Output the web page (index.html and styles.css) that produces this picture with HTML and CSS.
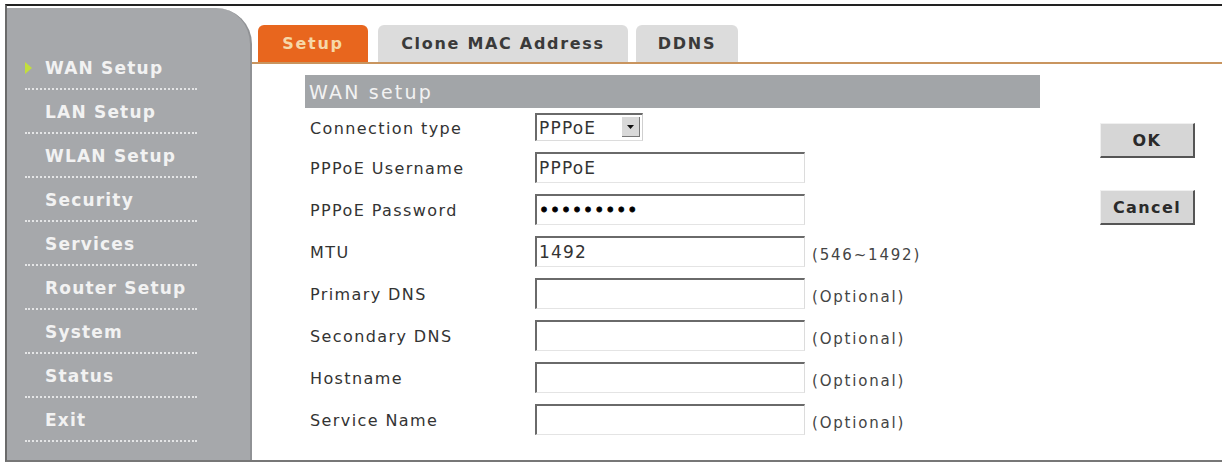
FILE: index.html
```html
<!DOCTYPE html>
<html lang="en">
<head>
<meta charset="utf-8">
<title>WAN Setup</title>
<link rel="stylesheet" href="styles.css">
</head>
<body>
<div class="frame">
  <nav class="sidebar">
    <ul class="menu">
      <li class="menu-item active">WAN Setup</li>
      <li class="menu-item">LAN Setup</li>
      <li class="menu-item">WLAN Setup</li>
      <li class="menu-item">Security</li>
      <li class="menu-item">Services</li>
      <li class="menu-item">Router Setup</li>
      <li class="menu-item">System</li>
      <li class="menu-item">Status</li>
      <li class="menu-item">Exit</li>
    </ul>
  </nav>
  <main class="main">
    <div class="tabs">
      <span class="tab tab-setup active">Setup</span>
      <span class="tab tab-clone">Clone MAC Address</span>
      <span class="tab tab-ddns">DDNS</span>
    </div>
    <div class="panel">
      <form class="wan-form">
        <div class="section-title">WAN setup</div>
        <div class="row first">
          <label class="label">Connection type</label>
          <div class="select-wrap">
            <select class="select"><option>PPPoE</option></select>
            <span class="select-arrow"><svg width="7" height="4" viewBox="0 0 7 4"><path d="M0 0h7L3.5 4z" fill="#111"/></svg></span>
          </div>
        </div>
        <div class="row">
          <label class="label">PPPoE Username</label>
          <input class="field" type="text" value="PPPoE">
        </div>
        <div class="row">
          <label class="label">PPPoE Password</label>
          <input class="field password" type="password" value="123456789">
        </div>
        <div class="row">
          <label class="label">MTU</label>
          <input class="field" type="text" value="1492">
          <span class="hint">(546~1492)</span>
        </div>
        <div class="row">
          <label class="label">Primary DNS</label>
          <input class="field" type="text">
          <span class="hint">(Optional)</span>
        </div>
        <div class="row">
          <label class="label">Secondary DNS</label>
          <input class="field" type="text">
          <span class="hint">(Optional)</span>
        </div>
        <div class="row">
          <label class="label">Hostname</label>
          <input class="field" type="text">
          <span class="hint">(Optional)</span>
        </div>
        <div class="row">
          <label class="label">Service Name</label>
          <input class="field" type="text">
          <span class="hint">(Optional)</span>
        </div>
      </form>
      <div class="actions">
        <button class="btn" type="button">OK</button>
        <button class="btn" type="button">Cancel</button>
      </div>
    </div>
  </main>
</div>
</body>
</html>
```
FILE: styles.css
```css
* { box-sizing: border-box; }

html, body {
  margin: 0;
  padding: 0;
  background: #fff;
  font-family: "DejaVu Sans", Verdana, sans-serif;
  color: #333;
}

.frame {
  display: flex;
  margin: 4px 6px 0 5px;
  height: 458px;
  border-top: 2px solid #222;
  border-left: 2px solid #6a6a6a;
  border-bottom: 2px solid #777;
}

/* left navigation column */
.sidebar {
  width: 245px;
  margin-top: 2px;
  background: #a6a8ab;
  border-right: 2px solid #909295;
  border-top-right-radius: 36px;
  padding-top: 38px;
}

.menu {
  list-style: none;
  margin: 0;
  padding: 0 0 0 18px;
  width: 190px;
}

.menu-item {
  position: relative;
  height: 44px;
  padding: 12px 0 10px 20px;
  line-height: 20px;
  font-size: 17px;
  font-weight: bold;
  letter-spacing: 1.2px;
  color: #f2f2f2;
  border-bottom: 2px dotted rgba(255, 255, 255, 0.7);
}

.menu-item.active::before {
  content: "";
  position: absolute;
  left: 0;
  top: 16px;
  border-left: 7px solid #c2de3c;
  border-top: 6px solid transparent;
  border-bottom: 6px solid transparent;
}

/* right content area */
.main {
  flex: 1;
  display: flex;
  flex-direction: column;
}

.tabs {
  display: flex;
  padding: 19px 0 0 6px;
  border-bottom: 2px solid #c9955f;
}

.tab {
  height: 37px;
  line-height: 38px;
  text-align: center;
  background: #dcdcdc;
  border-radius: 6px 6px 0 0;
  font-size: 16px;
  font-weight: bold;
  letter-spacing: 1.7px;
  color: #3a3a3a;
}

.tab-setup { width: 110px; }
.tab-clone { width: 250px; margin-left: 10px; }
.tab-ddns { width: 102px; margin-left: 8px; }

.tab.active {
  background: #e8661e;
  color: #f6d8a8;
}

.panel {
  display: flex;
  padding: 11px 0 0 53px;
}

.wan-form {
  width: 735px;
}

.section-title {
  height: 33px;
  line-height: 34px;
  padding-left: 4px;
  background: #a2a5a8;
  color: #f2f2f2;
  font-size: 19px;
  letter-spacing: 2.2px;
}

.row {
  display: flex;
  align-items: center;
  height: 42px;
}

.row.first {
  height: 38px;
}

.label {
  width: 230px;
  padding-left: 5px;
  padding-top: 3px;
  font-size: 16px;
  letter-spacing: 1.4px;
  color: #333;
}

.field {
  width: 270px;
  height: 31px;
  margin: 0;
  padding: 0 2px;
  border-style: solid;
  border-width: 2px 1px 1px 2px;
  border-color: #6a6a6a #dcdcdc #e4e4e4 #6a6a6a;
  background: #fff;
  font-family: "DejaVu Sans", Verdana, sans-serif;
  font-size: 17px;
  letter-spacing: 1.2px;
  color: #333;
  outline: none;
}

.field.password {
  font-size: 17px;
  letter-spacing: 1px;
  color: #000;
  -webkit-text-stroke: 0.8px #000;
}

.select-wrap {
  position: relative;
  width: 108px;
  height: 28px;
}

.select {
  appearance: none;
  -webkit-appearance: none;
  width: 100%;
  height: 100%;
  margin: 0;
  padding: 0 2px;
  border-style: solid;
  border-width: 2px 1px 1px 2px;
  border-color: #6a6a6a #cfcfcf #dcdcdc #6a6a6a;
  border-radius: 0;
  background: #fff;
  font-family: "DejaVu Sans", Verdana, sans-serif;
  font-size: 17px;
  letter-spacing: 1.2px;
  color: #333;
}

.select-arrow {
  position: absolute;
  right: 3px;
  top: 4px;
  width: 18px;
  height: 20px;
  display: flex;
  align-items: center;
  justify-content: center;
  background: #d9d9d9;
  border-right: 1px solid #777;
  border-bottom: 1px solid #777;
}

.hint {
  margin-left: 7px;
  padding-top: 8px;
  font-size: 15px;
  letter-spacing: 1.8px;
  color: #444;
}

.actions {
  display: flex;
  flex-direction: column;
  gap: 32px;
  margin-left: 60px;
  padding-top: 48px;
}

.btn {
  width: 95px;
  height: 35px;
  margin: 0;
  padding: 0;
  background: #d6d6d6;
  border-style: solid;
  border-width: 1px 2px 2px 1px;
  border-color: #f0f0f0 #555 #555 #f0f0f0;
  font-family: "DejaVu Sans", Verdana, sans-serif;
  font-size: 16px;
  font-weight: bold;
  letter-spacing: 1.4px;
  color: #2a2a2a;
}
```
